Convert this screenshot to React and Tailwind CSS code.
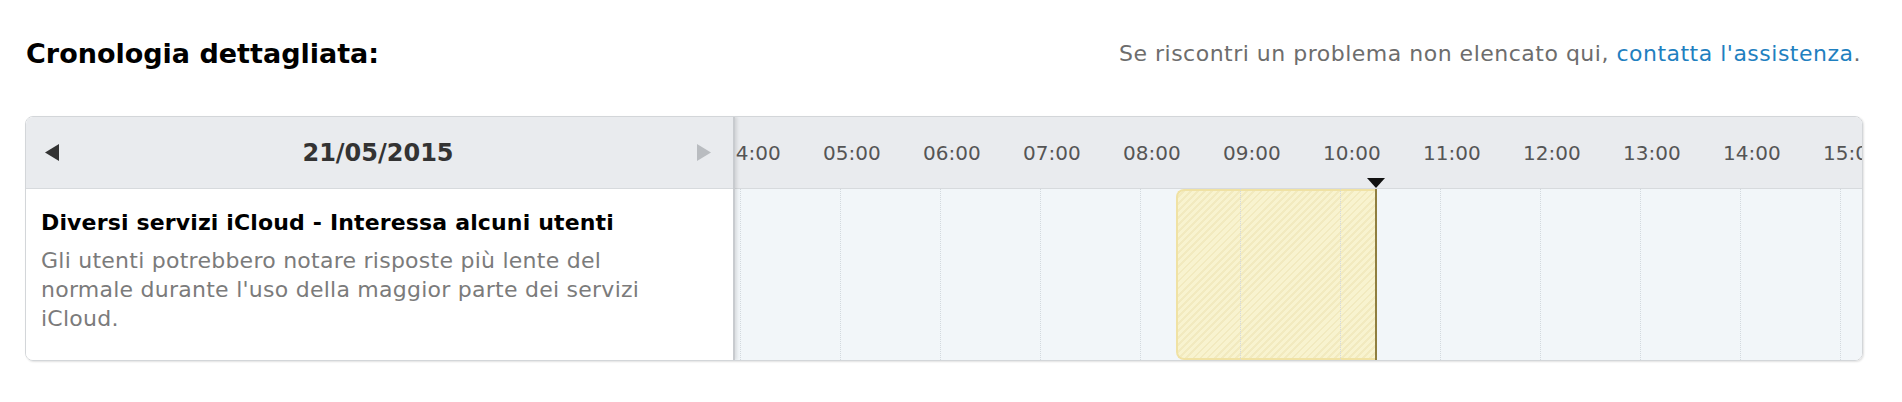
import React from 'react';

const hours = ['04:00', '05:00', '06:00', '07:00', '08:00', '09:00', '10:00', '11:00', '12:00', '13:00', '14:00', '15:00'];

const Arrow = ({ dir, className }) => (
  <svg width="14" height="17" viewBox="0 0 14 17" className={className}>
    {dir === 'left' ? <polygon points="14,0 14,17 0,8.5" fill="currentColor" /> : <polygon points="0,0 0,17 14,8.5" fill="currentColor" />}
  </svg>
);

export default function App() {
  return (
    <div className="min-h-screen bg-white font-['DejaVu_Sans',sans-serif]">
      <div className="pl-[25px] pt-[37px] w-[1863px]">
        {/* titolo */}
        <div className="flex items-center justify-between pl-[1px] pr-[2px]">
          <h2 className="text-[27px] leading-[34px] font-bold text-black">Cronologia dettagliata:</h2>
          <p className="text-[22px] leading-[34px] tracking-[0.5px] text-[#6d6d6d]">
            Se riscontri un problema non elencato qui, <a href="#" className="text-[#1f80c0]">contatta l'assistenza</a>.
          </p>
        </div>

        {/* cronologia */}
        <div className="mt-[45px] flex h-[245px] rounded-lg border border-[#d3d6d9] overflow-hidden shadow-[1px_1px_2px_rgba(0,0,0,0.12)]">
          <div className="w-[709px] shrink-0 flex flex-col relative z-10 border-r-2 border-[#c8cbcf] shadow-[2px_0_3px_rgba(0,0,0,0.1)] bg-white">
            <div className="h-[72px] shrink-0 flex items-center justify-between pl-[19px] pr-[22px] bg-[#e9ebee] border-b border-[#d7dadd]">
              <Arrow dir="left" className="text-[#333]" />
              <span className="text-[24px] font-bold text-[#333]">21/05/2015</span>
              <Arrow dir="right" className="text-[#b9bcc0]" />
            </div>
            <div className="pl-[15px] pt-[19px] w-[660px]">
              <h3 className="text-[22px] leading-[30px] tracking-[0.15px] font-bold text-black">Diversi servizi iCloud - Interessa alcuni utenti</h3>
              <p className="mt-[8px] text-[22px] leading-[29px] tracking-[0.25px] text-[#7b7b7b]">
                Gli utenti potrebbero notare risposte più lente del normale durante l'uso della maggior parte dei servizi iCloud.
              </p>
            </div>
          </div>

          <div className="flex-1 flex flex-col relative overflow-hidden">
            <div className="h-[72px] shrink-0 flex items-center bg-[#e9ebee] border-b border-[#d7dadd]">
              <div className="flex -ml-[12px]">
                {hours.map((h) => (
                  <div key={h} className="w-[100px] shrink-0 text-[20px] text-[#555]">{h}</div>
                ))}
              </div>
            </div>
            <div className="flex-1 relative bg-[#f2f6f9]">
              <div className="absolute top-0 bottom-0 left-[441px] w-[200px] rounded-l-lg border-2 border-r-0 border-[#f0e2a4] bg-[repeating-linear-gradient(135deg,#f8f3cf_0px,#f8f3cf_3px,#f2eabf_3px,#f2eabf_5px)]" />
              <div className="absolute inset-0 flex pl-[5px]">
                {hours.map((h) => (
                  <div key={h} className="w-[100px] shrink-0 h-full border-l border-dotted border-[#d3d9de]" />
                ))}
              </div>
              <div className="absolute top-0 bottom-0 left-[640px] w-[2px] bg-[#8f7e3f]" />
            </div>
            <svg width="18" height="10" viewBox="0 0 18 10" className="absolute top-[61px] left-[632px]">
              <polygon points="0,0 18,0 9,10" fill="#111" />
            </svg>
          </div>
        </div>
      </div>
    </div>
  );
}
